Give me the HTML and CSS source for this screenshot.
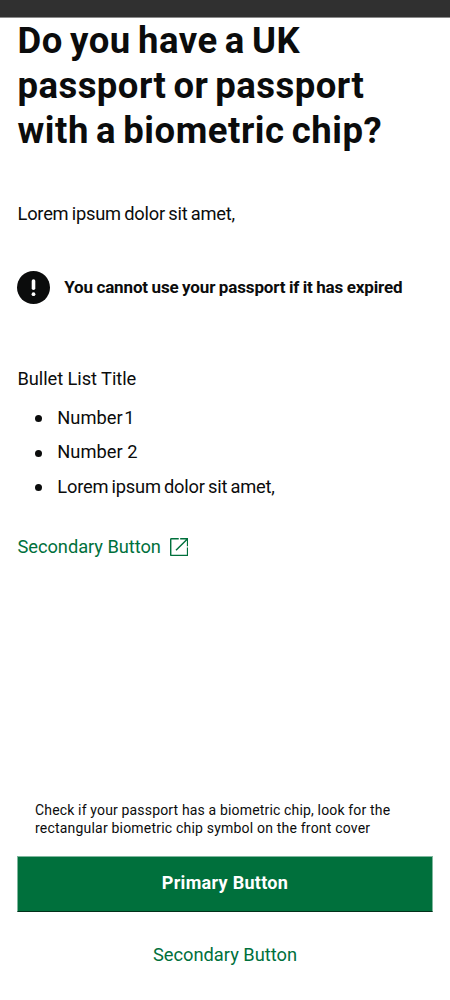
FILE: index.html
```html
<!DOCTYPE html>
<html lang="en">
<head>
<meta charset="utf-8">
<title>Passport check</title>
<link rel="stylesheet" href="styles.css">
</head>
<body>
<div class="screen">
  <div class="status-bar"></div>
  <main class="content">
    <h1 class="title"><span class="title-wide">Do you have a UK</span><br>passport or passport<br><span class="title-wide">with a biometric chip?</span></h1>
    <p class="body lorem intro">Lorem ipsum dolor sit amet,</p>
    <div class="warning">
      <svg class="warning-icon" viewBox="0 0 33 33" aria-hidden="true">
        <circle cx="16.5" cy="16.5" r="16.5" fill="#0b0c0c"/>
        <path d="M16.5 10V17.3" stroke="#fff" stroke-width="3.6" stroke-linecap="round"/>
        <circle cx="16.5" cy="23.2" r="1.9" fill="#fff"/>
      </svg>
      <strong class="warning-text">You cannot use your passport if it has expired</strong>
    </div>
    <p class="body list-title">Bullet List Title</p>
    <ul class="list">
      <li class="body"><span class="narrow">Number 1</span></li>
      <li class="body"><span>Number 2</span></li>
      <li class="body"><span class="lorem">Lorem ipsum dolor sit amet,</span></li>
    </ul>
    <a class="link">
      <span>Secondary Button</span>
      <svg class="link-icon" viewBox="0 0 18 18" fill="none" stroke="#00703c" stroke-width="1.4" aria-hidden="true">
        <path d="M8.6 .7H1.4Q.7 .7 .7 1.4V16.6Q.7 17.3 1.4 17.3H16.6Q17.3 17.3 17.3 16.6V9.4"/>
        <path d="M10 .7H17.3V8M17.1 .9L5.9 12.1"/>
      </svg>
    </a>
  </main>
  <footer class="footer">
    <p class="hint">Check if your passport has a biometric chip, look for the<br><span class="hint-second">rectangular biometric chip symbol on the front cover</span></p>
    <button class="primary">Primary Button</button>
    <a class="secondary">Secondary Button</a>
  </footer>
</div>
</body>
</html>
```
FILE: styles.css
```css
* { box-sizing: border-box; }
body { margin: 0; background: #fff; color: #0b0c0c; font-family: Roboto, sans-serif; }
h1, p, ul { margin: 0; padding: 0; }
.screen { width: 450px; height: 1000px; display: flex; flex-direction: column; overflow: hidden; }
.status-bar { height: 18px; background: #303030; border-bottom: 1px solid #8a8a8a; flex: none; }
.content { padding: 0 17.5px; display: flex; flex-direction: column; align-items: flex-start; flex: 1; white-space: nowrap; }
.title { margin-top: -0.5px; font-size: 36.5px; line-height: 45px; font-weight: 700; letter-spacing: 0.45px; word-spacing: -2.5px; }
.title-wide { letter-spacing: 0.54px; }
.body { font-size: 18.3px; line-height: 26px; }
.lorem { letter-spacing: -0.22px; word-spacing: -1px; }
.intro { margin-top: 48px; }
.warning { display: flex; align-items: center; gap: 14px; margin-top: 44px; margin-left: -0.3px; }
.warning-icon { width: 33px; height: 33px; }
.warning-text { font-size: 17px; line-height: 24px; font-weight: 700; letter-spacing: -0.13px; word-spacing: -0.6px; }
.list-title { margin-top: 62px; letter-spacing: -0.07px; }
.list { list-style: none; margin-top: 9px; padding-left: 17.3px; }
.list li { display: flex; align-items: center; gap: 15.5px; height: 34.6px; }
.list li::before { content: ""; width: 7px; height: 7px; margin-top: 2px; border-radius: 50%; background: #0b0c0c; }
.narrow { word-spacing: -3px; }
.link { display: flex; align-items: center; gap: 9px; margin-top: 30px; color: #00703c; font-size: 18.3px; line-height: 26px; letter-spacing: -0.05px; }
.link-icon { width: 18.3px; height: 18.3px; }
.footer { padding: 1px 17px 0; height: 199px; display: flex; flex-direction: column; white-space: nowrap; }
.hint { padding-left: 18px; font-size: 14px; line-height: 17.5px; letter-spacing: 0.16px; }
.hint-second { letter-spacing: 0.2px; }
.primary { margin-top: 19px; height: 56px; border: 1px solid #80b79e; border-bottom-color: #02301a; padding: 0 0 3px; background: #00703c; color: #fff; font: 700 18px/26px Roboto, sans-serif; letter-spacing: 0.3px; }
.secondary { margin-top: 30px; text-align: center; color: #00703c; font-size: 18.3px; line-height: 26px; }
```
